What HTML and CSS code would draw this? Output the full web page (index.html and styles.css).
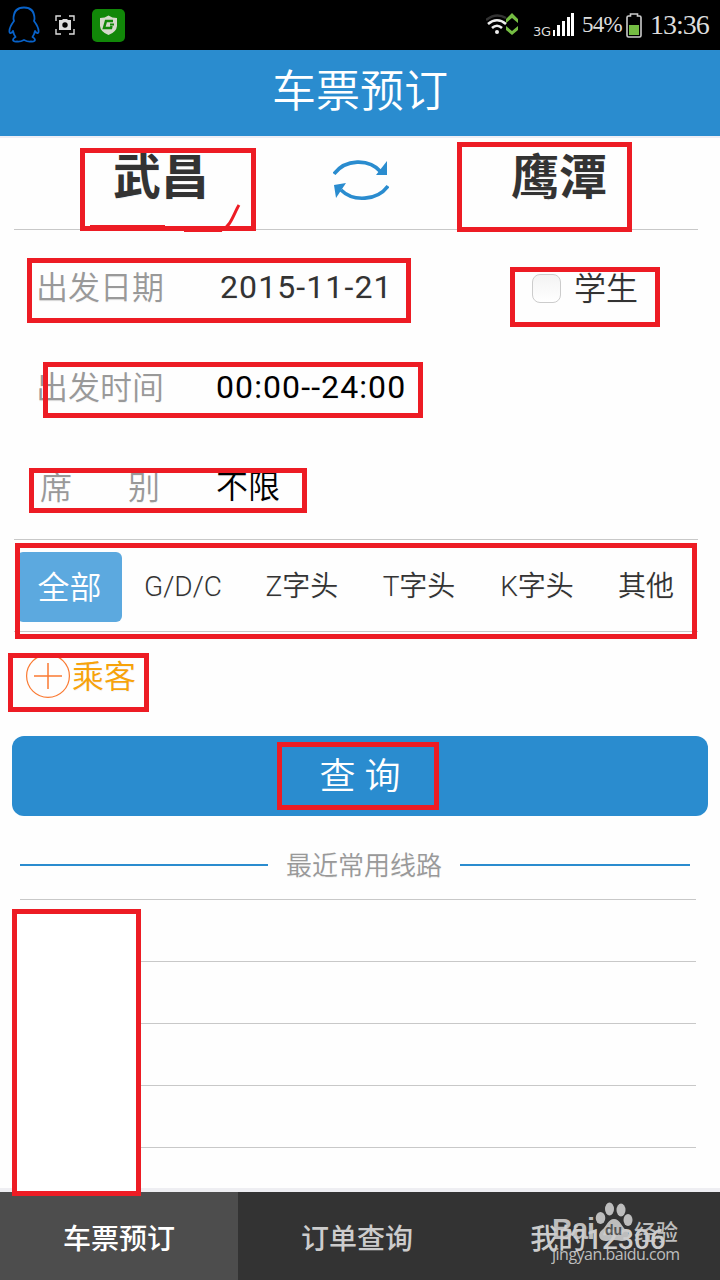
FILE: index.html
```html
<!DOCTYPE html>
<html lang="zh-CN">
<head>
    <meta charset="UTF-8">
    <meta name="viewport" content="width=device-width, initial-scale=1.0">
    <title>车票预订</title>
    <link rel="stylesheet" href="styles.css">
</head>
<body>

    <!-- Status Bar -->
    <div class="status-bar">
        <svg class="icon-qq" width="32" height="38" viewBox="0 0 32 38" fill="none" stroke="#0862c9" stroke-width="1.8" stroke-linejoin="round">
            <path d="M5.500 13C5.500 5 10 1.500 16 1.500S26.500 5 26.500 13L26 15C29 19 31 23 30.500 26C30 28 28 27 27 25C26.500 28 25.500 29.500 24.500 31C28 33 28 36 23 35.500C20 36 18 35 16 34C14 35 12 36 9 35.500C4 36 4 33 7.500 31C6.500 29.500 5.500 28 5 25C4 27 2 28 1.500 26C1 23 3 19 6 15Z"/>
        </svg>
        <svg class="icon-shot" width="20" height="20" viewBox="0 0 20 20">
            <path d="M1 6V1H6M14 1H19V6M19 14V19H14M6 19H1V14" fill="none" stroke="#ddd" stroke-width="1.400"/>
            <path d="M4 5H7L8 4H12L13 5H16V15H4Z" fill="#ddd"/>
            <circle cx="10" cy="10" r="2.700" fill="#000"/>
        </svg>
        <svg class="icon-guard" width="33" height="33" viewBox="0 0 33 33">
            <rect width="33" height="33" rx="5" fill="#118708"/>
            <path d="M8 9Q13 9 16.500 6.500Q20 9 25 9V17Q24.500 23 16.500 26Q8.500 23 8 17Z" fill="#d5d9cb"/>
            <path d="M21 12H14L12 19H19L19.500 17" fill="none" stroke="#118708" stroke-width="2.500"/>
            <path d="M18 15.500H22" stroke="#118708" stroke-width="2"/>
        </svg>
        <div class="status-right">
            <svg width="33" height="24" viewBox="0 0 33 24">
                <path d="M0 7Q10 -1 20 5" fill="none" stroke="#333" stroke-width="2.500"/>
                <path d="M2 11Q11 3.500 20 11M6 15Q11 10.500 16 15" fill="none" stroke="#eee" stroke-width="2.600"/>
                <circle cx="11" cy="19" r="2" fill="#eee"/>
                <path d="M20 10V6L26 0L32 6V10L26 5ZM20 13V17L26 22L32 17V13L26 18Z" fill="#75bd43"/>
            </svg>
            <span class="net">3G</span>
            <svg class="signal" width="22" height="24" viewBox="0 0 22 24" fill="#fff">
                <rect x="0" y="17" width="2" height="6"/>
                <rect x="4" y="12" width="3" height="11"/>
                <rect x="9" y="8" width="3" height="15"/>
                <rect x="14" y="4" width="3" height="19"/>
                <rect x="18" y="0" width="3" height="23"/>
            </svg>
            <span class="percent">54%</span>
            <svg class="battery" width="16" height="25" viewBox="0 0 16 25">
                <path d="M1 4.500Q1 3 2.500 3H4.500V1H11.500V3H13.500Q15 3 15 4.500V22.500Q15 24 13.500 24H2.500Q1 24 1 22.500Z" fill="none" stroke="#ccc" stroke-width="1.600"/>
                <rect x="3" y="12" width="10" height="10" fill="#75bd43"/>
            </svg>
            <span class="clock">13:36</span>
        </div>
    </div>

    <header>车票预订</header>

    <main>
        <!-- Stations -->
        <section class="stations">
            <span class="station">武昌</span>
            <svg class="swap" width="56" height="42" viewBox="0 0 56 42" fill="none" stroke="#2a8ccf" stroke-width="3.600">
                <path d="M1 15C12 0 36 -1 48 13"/>
                <path d="M54 2V16L43 16Z" fill="#2a8ccf" stroke="none"/>
                <path d="M55 27C44 42 20 43 8 31"/>
                <path d="M1 26L13 24L9 30L3 39Z" fill="#2a8ccf" stroke="none"/>
            </svg>
            <span class="station">鹰潭</span>
        </section>

        <!-- Search Options -->
        <section class="options">
            <div class="row">
                <span class="label">出发日期</span>
                <span class="value date">2015-11-21</span>
                <label class="student"><span class="checkbox"></span>学生</label>
            </div>
            <div class="row">
                <span class="label">出发时间</span>
                <span class="value">00:00--24:00</span>
            </div>
            <div class="row">
                <span class="label seat"><span>席</span><span>别</span></span>
                <span class="value seat-value">不限</span>
            </div>
        </section>

        <!-- Train Types -->
        <nav class="types">
            <span class="active">全部</span>
            <span>G/D/C</span>
            <span>Z字头</span>
            <span>T字头</span>
            <span>K字头</span>
            <span>其他</span>
        </nav>

        <div class="passenger">
            <svg width="44" height="44" viewBox="0 0 44 44" fill="none" stroke="#fa7a32">
                <circle cx="22" cy="22" r="21.400" stroke-width="1.200"/>
                <path d="M22 9V35M8 22H36" stroke-width="1.500"/>
            </svg>
            <span>乘客</span>
        </div>

        <button class="query">查 询</button>

        <!-- Recent Routes -->
        <h2 class="recent"><span>最近常用线路</span></h2>
        <ul class="routes">
            <li></li>
            <li></li>
            <li></li>
            <li></li>
        </ul>
    </main>

    <!-- Bottom Tabs -->
    <footer>
        <span class="active">车票预订</span>
        <span>订单查询</span>
        <span>我的12306</span>
    </footer>

    <!-- Watermark -->
    <div class="watermark">
        <div class="brand">
            <span class="bai">Bai</span>
            <svg width="38" height="43" viewBox="0 0 38 43" fill="#ccc">
                <ellipse cx="5.500" cy="16" rx="4.800" ry="6"/>
                <ellipse cx="14.500" cy="7" rx="4.500" ry="6.500"/>
                <ellipse cx="26" cy="8" rx="4.500" ry="6.500"/>
                <ellipse cx="33" cy="18" rx="4.500" ry="6"/>
                <path d="M19 17C13 17 12 24 7 28C1 33 5 40 12 39Q19 37 26 39C34 40 37 33 31 28C26 24 25 17 19 17Z"/>
            </svg>
            <span class="du">du</span>
            <span class="jingyan">经验</span>
        </div>
        <div class="site">jingyan.baidu.com</div>
    </div>

    <!-- Hand-drawn marks -->
    <svg class="marks" width="720" height="1280" viewBox="0 0 720 1280" fill="none" stroke="#ed1c24" stroke-width="5">
        <rect x="82.500" y="150.500" width="171" height="78"/>
        <rect x="459.500" y="144.500" width="170" height="85"/>
        <rect x="29.500" y="260.500" width="379" height="60"/>
        <rect x="512.500" y="269.500" width="145" height="55"/>
        <rect x="45.500" y="364.500" width="375" height="51"/>
        <rect x="31.500" y="470.500" width="273" height="40"/>
        <rect x="17.500" y="545.500" width="677" height="91"/>
        <rect x="10.500" y="655.500" width="136" height="54"/>
        <rect x="279.500" y="744.500" width="157" height="63"/>
        <rect x="14.500" y="911.500" width="124" height="282" fill="#fff"/>
        <path d="M90 226.500H165M184 230.500H222" stroke-width="3"/>
        <path d="M222 230C231 226 234 213 239 205" stroke-width="3"/>
    </svg>

</body>
</html>
```

FILE: styles.css
```css
* {
    box-sizing: border-box;
}

body {
    margin: 0;
    height: 1280px;
    position: relative;
    display: flex;
    flex-direction: column;
    overflow: hidden;
    background: #fefefe;
    color: #333;
    font-family: Roboto, "Noto Sans CJK SC", sans-serif;
    text-shadow: 0 1px 0 #f3f3f3;
}

svg {
    display: block;
    flex: none;
}

/* Status Bar */
.status-bar {
    height: 50px;
    padding: 0 11px 0 8px;
    display: flex;
    align-items: center;
    background: #000;
    color: #ddd;
    text-shadow: none;
}

.icon-shot {
    margin-left: 15px;
}

.icon-guard {
    margin-left: 17px;
}

.status-right {
    margin-left: auto;
    display: flex;
    align-items: center;
    font-family: "Liberation Serif", serif;
}

.net {
    width: 19px;
    margin: 12px 1px 0 14px;
    font: 13px "DejaVu Sans", sans-serif;
    letter-spacing: -0.3px;
}

.percent {
    width: 40px;
    margin-left: 7px;
    font-size: 23px;
    letter-spacing: -0.8px;
}

.battery {
    margin-left: 4px;
}

.clock {
    width: 59px;
    margin-left: 8px;
    font-size: 28px;
    letter-spacing: -1px;
}

header {
    height: 88px;
    background: #2a8ccf;
    border-bottom: 2px solid #eeeef5;
    color: #fff;
    font-size: 44px;
    font-weight: 350;
    line-height: 85px;
    text-align: center;
    text-shadow: none;
}

main {
    flex: 1;
}

/* Stations */
.stations {
    height: 92px;
    margin: 0 22px 0 14px;
    padding: 0 91px 10px 99px;
    display: flex;
    align-items: center;
    justify-content: space-between;
    border-bottom: 1px solid #c8c8c8;
}

.station {
    padding-bottom: 1px;
    font-size: 48px;
    font-weight: bold;
    line-height: 80px;
}

.swap {
    margin: 2px 0 0 2px;
}

/* Search Options */
.options {
    height: 310px;
    margin: 0 22px 0 14px;
    padding: 7px 0 0 22px;
    border-bottom: 1px solid #c8c8c8;
}

.row {
    height: 100px;
    display: flex;
    align-items: center;
    font-size: 32px;
    line-height: 40px;
}

.label {
    width: 180px;
    padding-top: 1px;
    color: #999;
    font-weight: 350;
}

.seat {
    display: flex;
    gap: 56px;
    padding-left: 4px;
}

.value {
    color: #000;
    letter-spacing: 1.1px;
}

.seat-value {
    font-weight: 350;
    letter-spacing: 0;
}

.date {
    margin-left: 4px;
    color: #333;
}

.student {
    margin-left: auto;
    margin-right: 60px;
    padding-top: 3px;
    display: flex;
    align-items: center;
    gap: 13px;
    font-weight: 350;
}

.checkbox {
    width: 29px;
    height: 29px;
    border: 1px solid #ccc;
    border-radius: 8px;
    background: linear-gradient(#f3f3f3, #fff);
}

/* Train Types */
.types {
    height: 92px;
    margin: 0 22px 0 14px;
    padding: 2px 2px 0 3px;
    display: grid;
    grid-template-columns: 105px 122px 116px 118px 118px 100px;
    align-items: center;
    border-bottom: 1px solid #c8c8c8;
    font-size: 28px;
    font-weight: 350;
    line-height: 72px;
    text-align: center;
}

.types .active {
    height: 70px;
    background: #5ca9df;
    border-radius: 6px;
    color: #fff;
    font-size: 32px;
    text-shadow: none;
}

/* Passenger */
.passenger {
    height: 104px;
    padding: 0 0 16px 26px;
    display: flex;
    align-items: center;
    gap: 2px;
    color: #f7a30a;
    font-size: 32px;
    font-weight: 350;
}

.passenger span {
    padding-bottom: 5px;
}

.query {
    display: block;
    width: 696px;
    height: 80px;
    margin: 0 12px;
    padding: 0;
    border: none;
    border-radius: 12px;
    background: #2a8ccf;
    color: #fff;
    font-family: inherit;
    font-size: 36px;
    font-weight: 350;
    line-height: 82px;
}

/* Recent Routes */
.recent {
    height: 83px;
    margin: 0;
    padding: 15px 30px 0 20px;
    display: flex;
    align-items: center;
    gap: 18px;
    color: #999;
    font-size: 26px;
    font-weight: 350;
}

.recent span {
    padding-bottom: 4px;
}

.recent::before,
.recent::after {
    content: "";
    height: 2px;
    background: #2a8ccf;
}

.recent::before {
    width: 248px;
}

.recent::after {
    flex: 1;
}

.routes {
    margin: 0 24px 0 20px;
    padding: 0;
    border-top: 1px solid #c8c8c8;
    list-style: none;
}

.routes li {
    height: 62px;
    border-bottom: 1px solid #c8c8c8;
}

/* Bottom Tabs */
footer {
    height: 92px;
    display: grid;
    grid-template-columns: 238px 238px 1fr;
    border-top: 4px solid #eeeef2;
    background: #333;
    color: #ccc;
    font-size: 28px;
    font-weight: 500;
    line-height: 95px;
    text-align: center;
    text-shadow: none;
}

footer span {
    height: 88px;
}

footer .active {
    background: #4d4d4d;
    color: #fff;
}

/* Watermark */
.watermark {
    position: absolute;
    left: 552px;
    top: 1202px;
    width: 130px;
    color: #ccc;
    opacity: 0.9;
    text-shadow: none;
}

.brand {
    height: 43px;
    position: relative;
    display: flex;
    align-items: flex-end;
}

.bai {
    width: 43px;
    font: bold 29px/32px "Liberation Sans", sans-serif;
    letter-spacing: -1px;
}

.du {
    position: absolute;
    left: 53px;
    top: 20px;
    color: #555;
    font: bold 14px/16px "Liberation Sans", sans-serif;
}

.jingyan {
    margin-left: 1px;
    font-size: 22px;
    font-weight: 500;
    line-height: 24px;
}

.site {
    font: 16px/18px "Open Sans", sans-serif;
    letter-spacing: -0.5px;
}

/* Marks over the page */
.marks {
    position: absolute;
    left: 0;
    top: 0;
}
```
